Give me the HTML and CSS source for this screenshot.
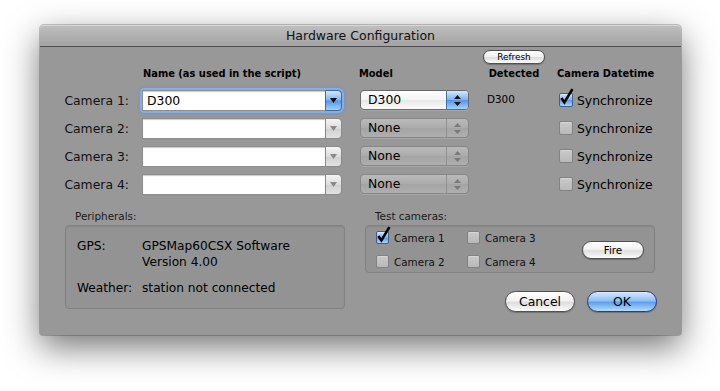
FILE: index.html
```html
<!DOCTYPE html>
<html>
<head>
<meta charset="utf-8">
<title>Hardware Configuration</title>
<link rel="stylesheet" href="styles.css">
</head>
<body>
<div class="desk">
  <div class="window">
    <div class="titlebar">Hardware Configuration</div>
    <div class="content">
      <div class="cams">
        <div class="spacer"></div><div class="spacer"></div><div class="spacer"></div>
        <div class="refresh-cell"><button class="btn small">Refresh</button></div>
        <div class="spacer"></div>

        <div class="spacer"></div>
        <div class="head head-name">Name (as used in the script)</div>
        <div class="head head-model">Model</div>
        <div class="head head-det">Detected</div>
        <div class="head head-dt">Camera Datetime</div>

        <div class="rlabel">Camera 1:</div>
        <div class="combo focus"><div class="field">D300</div><div class="carrow"><svg width="7" height="5" viewBox="0 0 7 5"><path d="M0 0h7L3.5 5z"/></svg></div></div>
        <div class="popup on"><div class="ptext">D300</div><div class="parrow"><svg width="7" height="11" viewBox="0 0 7 11"><path d="M3.5 0L7 4H0zM0 7h7L3.5 11z"/></svg></div></div>
        <div class="det">D300</div>
        <label class="chk sync"><span class="cb on"><svg width="15" height="17" viewBox="0 0 15 17"><path d="M2.4 10L5.4 14.4L13.4 1.2" fill="none" stroke="#000" stroke-width="2.6"/></svg></span><span>Synchronize</span></label>

        <div class="rlabel">Camera 2:</div>
        <div class="combo"><div class="field"></div><div class="carrow"><svg width="7" height="5" viewBox="0 0 7 5"><path d="M0 0h7L3.5 5z"/></svg></div></div>
        <div class="popup"><div class="ptext">None</div><div class="parrow"><svg width="7" height="11" viewBox="0 0 7 11"><path d="M3.5 0L7 4H0zM0 7h7L3.5 11z"/></svg></div></div>
        <div class="det"></div>
        <label class="chk sync"><span class="cb"></span><span>Synchronize</span></label>

        <div class="rlabel">Camera 3:</div>
        <div class="combo"><div class="field"></div><div class="carrow"><svg width="7" height="5" viewBox="0 0 7 5"><path d="M0 0h7L3.5 5z"/></svg></div></div>
        <div class="popup"><div class="ptext">None</div><div class="parrow"><svg width="7" height="11" viewBox="0 0 7 11"><path d="M3.5 0L7 4H0zM0 7h7L3.5 11z"/></svg></div></div>
        <div class="det"></div>
        <label class="chk sync"><span class="cb"></span><span>Synchronize</span></label>

        <div class="rlabel">Camera 4:</div>
        <div class="combo"><div class="field"></div><div class="carrow"><svg width="7" height="5" viewBox="0 0 7 5"><path d="M0 0h7L3.5 5z"/></svg></div></div>
        <div class="popup"><div class="ptext">None</div><div class="parrow"><svg width="7" height="11" viewBox="0 0 7 11"><path d="M3.5 0L7 4H0zM0 7h7L3.5 11z"/></svg></div></div>
        <div class="det"></div>
        <label class="chk sync"><span class="cb"></span><span>Synchronize</span></label>
      </div>

      <div class="lower">
        <div class="periph">
          <div class="group-label">Peripherals:</div>
          <div class="box pbox">
            <div>GPS:</div><div>GPSMap60CSX Software</div>
            <div></div><div>Version 4.00</div>
            <div class="wrow">Weather:</div><div class="wrow">station not connected</div>
          </div>
        </div>
        <div class="rightcol">
          <div class="group-label">Test cameras:</div>
          <div class="box tbox">
            <div class="tchecks">
              <label class="chk small"><span class="cb on"><svg width="15" height="17" viewBox="0 0 15 17"><path d="M2.4 10L5.4 14.4L13.4 1.2" fill="none" stroke="#000" stroke-width="2.6"/></svg></span><span>Camera 1</span></label>
              <label class="chk small"><span class="cb"></span><span>Camera 3</span></label>
              <label class="chk small"><span class="cb"></span><span>Camera 2</span></label>
              <label class="chk small"><span class="cb"></span><span>Camera 4</span></label>
            </div>
            <button class="btn fire">Fire</button>
          </div>
          <div class="actions">
            <button class="btn act">Cancel</button>
            <button class="btn act ok">OK</button>
          </div>
        </div>
      </div>
    </div>
  </div>
</div>
</body>
</html>
```

FILE: styles.css
```css
* { box-sizing: border-box; }
html, body { margin: 0; padding: 0; background: #fff; }
body {
  font-family: "DejaVu Sans", sans-serif;
  font-size: 12.4px;
  color: #000;
}
.desk {
  width: 720px;
  height: 391px;
  padding: 25px 0 0 40px;
  overflow: hidden;
}
.window {
  width: 641px;
  height: 310px;
  background: #989898;
  border-radius: 4px 4px 3px 3px;
  box-shadow: 0 0 0 1px rgba(0,0,0,.2), 0 12px 34px rgba(0,0,0,.55);
}
.titlebar {
  height: 22px;
  border-bottom: 1px solid #4e4e4e;
  background: linear-gradient(#bfbfbf, #a3a3a3);
  border-radius: 4px 4px 0 0;
  box-shadow: inset 0 1px 0 #d8d8d8;
  text-align: center;
  font-size: 12.5px;
  line-height: 21px;
  color: #111;
}
.content { padding-top: 2px; }

.cams {
  display: grid;
  grid-template-columns: 102px 200px 141px 62px 1fr;
  grid-template-rows: 14px 23px repeat(4, 28px);
  align-items: center;
}
.refresh-cell { display: flex; height: 14px; }
.head {
  font-weight: bold;
  font-size: 9.9px;
  padding-bottom: 2px;
}
.head-name { padding-left: 1px; }
.head-model { padding-left: 17px; }
.head-det { text-align: center; }
.head-dt { padding-left: 12px; }

.rlabel {
  text-align: right;
  padding-right: 13px;
  color: #111;
}

.combo {
  display: flex;
  width: 200px;
  height: 21px;
}
.combo .field {
  flex: 1;
  background: #fff;
  border: 1px solid #8e8e8e;
  border-right: none;
  box-shadow: inset 0 1px 1px rgba(0,0,0,.22);
  padding-left: 4px;
  line-height: 19px;
}
.combo .carrow {
  width: 17px;
  border: 1px solid #8a8a8a;
  border-radius: 0 4px 4px 0;
  background: linear-gradient(#f4f4f4, #dcdcdc 50%, #d0d0d0 51%, #e2e2e2);
  display: flex;
  align-items: center;
  justify-content: center;
  fill: #8a8a8a;
}
.combo.focus {
  border-radius: 2px 4px 4px 2px;
  box-shadow: 0 0 0 2px #86aee2, 0 0 3px 3px rgba(90,140,220,.45);
}
.combo.focus .carrow {
  background: linear-gradient(#d4e7fc, #7fb4f0 48%, #5595e7 52%, #a3d3fb);
  border-color: #3d6aa8;
  fill: #111;
}

.popup {
  margin-left: 18px;
  width: 109px;
  height: 20px;
  display: flex;
  border: 1px solid #868686;
  border-radius: 4px;
  background: linear-gradient(#bababa, #ababab 50%, #a4a4a4 51%, #afafaf);
  box-shadow: 0 1px 0 rgba(255,255,255,.15);
}
.popup .ptext {
  flex: 1;
  padding-left: 7px;
  line-height: 18px;
}
.popup .parrow {
  width: 22px;
  border-left: 1px solid #8f8f8f;
  display: flex;
  align-items: center;
  justify-content: center;
  fill: #7a7a7a;
}
.popup.on {
  border-color: #6a6a6a;
  background: linear-gradient(#ffffff, #f3f3f3 50%, #e7e7e7 51%, #fbfbfb);
}
.popup.on .parrow {
  border-radius: 0 3px 3px 0;
  border-left-color: #4471b0;
  background: linear-gradient(#d4e7fc, #7fb4f0 48%, #5595e7 52%, #a3d3fb);
  fill: #111;
}

.det {
  font-size: 10.4px;
  padding-left: 4px;
  padding-bottom: 2px;
}

.chk {
  display: flex;
  align-items: center;
  gap: 4px;
}
.sync { padding-left: 14px; }
.cb {
  position: relative;
  flex: none;
  width: 14px;
  height: 14px;
  border: 1px solid #828282;
  border-radius: 2px;
  background: linear-gradient(#cacaca, #b8b8b8);
  box-shadow: inset 0 1px 0 rgba(255,255,255,.25);
}
.cb.on {
  border-color: #3f5f92;
  background: linear-gradient(#d6e8fc, #7fb3ef 50%, #5d9ae8 51%, #a9d4fb);
}
.cb svg {
  position: absolute;
  left: -1px;
  top: -6px;
}

.lower {
  display: flex;
  margin-top: 12px;
  padding-left: 25px;
}
.group-label {
  font-size: 10.4px;
  line-height: 13px;
  padding-left: 10px;
  margin-bottom: 2px;
  color: #1a1a1a;
}
.box {
  border: 1px solid #828282;
  border-radius: 4px;
  background: #939393;
  box-shadow: inset 0 1px 1px rgba(0,0,0,.08);
}
.periph { width: 280px; }
.pbox {
  height: 84px;
  padding: 12px 0 0 11px;
  display: grid;
  grid-template-columns: 65px auto;
  grid-template-rows: 16px 16px 26px;
  font-size: 12.2px;
  line-height: 16px;
}
.wrow { align-self: end; }

.rightcol {
  width: 292px;
  margin-left: 20px;
}
.tbox {
  width: 290px;
  height: 48px;
  display: flex;
  align-items: center;
  padding-left: 10px;
}
.tchecks {
  display: grid;
  grid-template-columns: 91px auto;
  grid-auto-rows: 20px;
  row-gap: 4px;
  align-items: center;
  margin-top: 1px;
}
.chk.small { font-size: 10.4px; color: #111; gap: 5px; }
.chk.small .cb { width: 13px; height: 13px; }

.btn {
  padding: 0;
  height: 21px;
  border: 1px solid #505050;
  border-radius: 11px;
  background: linear-gradient(#ffffff, #f3f3f3 45%, #dedede 55%, #fbfbfb);
  box-shadow: 0 1px 1px rgba(0,0,0,.25);
  font-family: "DejaVu Sans", sans-serif;
  font-size: 12.4px;
  color: #000;
  display: flex;
  align-items: center;
  justify-content: center;
}
.btn.small {
  width: 62px;
  height: 14px;
  font-size: 8.9px;
  border-radius: 7px;
  margin-top: 1px;
}
.btn.fire {
  width: 62px;
  height: 18px;
  font-size: 10.4px;
  border-radius: 9px;
  margin-left: auto;
  margin-right: 10px;
  margin-top: 2px;
}
.actions {
  display: flex;
  justify-content: flex-end;
  gap: 12px;
  margin-top: 18px;
}
.btn.act { width: 70px; }
.btn.ok {
  border-color: #23407a;
  background: linear-gradient(#d8e9fc, #90c0f4 45%, #609fec 55%, #b4ddfd);
}
```
